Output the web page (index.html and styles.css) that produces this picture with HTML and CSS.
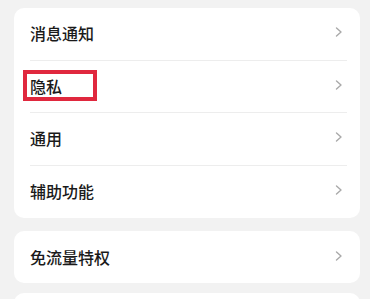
FILE: index.html
```html
<!DOCTYPE html>
<html lang="zh">
<head>
<meta charset="utf-8">
<link rel="stylesheet" href="styles.css">
</head>
<body>
<div class="page">
  <div class="card">
    <div class="row"><span class="label">消息通知</span><svg class="chev" viewBox="0 0 8 10"><polyline points="1.5,1 6,5 1.5,9"/></svg></div>
    <div class="row"><span class="label">隐私</span><svg class="chev" viewBox="0 0 8 10"><polyline points="1.5,1 6,5 1.5,9"/></svg><div class="mark"></div></div>
    <div class="row"><span class="label">通用</span><svg class="chev" viewBox="0 0 8 10"><polyline points="1.5,1 6,5 1.5,9"/></svg></div>
    <div class="row"><span class="label">辅助功能</span><svg class="chev" viewBox="0 0 8 10"><polyline points="1.5,1 6,5 1.5,9"/></svg></div>
  </div>
  <div class="card card-2">
    <div class="row"><span class="label">免流量特权</span><svg class="chev" viewBox="0 0 8 10"><polyline points="1.5,1 6,5 1.5,9"/></svg></div>
  </div>
  <div class="card card-3"></div>
</div>
</body>
</html>
```
FILE: styles.css
```css
html, body {
  margin: 0;
  padding: 0;
  background: #f2f2f2;
}
.page {
  width: 370px;
  height: 299px;
  overflow: hidden;
  padding: 8px 10px 0 14px;
  box-sizing: border-box;
  font-family: "Noto Sans CJK SC", "Noto Sans", sans-serif;
}
.card {
  background: #ffffff;
  border-radius: 10px;
  width: 346px;
}
.row {
  position: relative;
  display: flex;
  align-items: center;
  justify-content: space-between;
  height: 52.5px;
  box-sizing: border-box;
  margin: 0 13px 0 16px;
  border-bottom: 1px solid #ededed;
}
.row:last-child {
  border-bottom: none;
}
.label {
  font-size: 16px;
  font-weight: 500;
  color: #1a1a1a;
  line-height: 1;
  margin-top: -1px;
}
.chev {
  width: 8px;
  height: 10px;
  margin-right: 4px;
  margin-top: -3px;
  fill: none;
  stroke: #a9a9a9;
  stroke-width: 1.4;
  stroke-linecap: round;
  stroke-linejoin: round;
}
.mark {
  position: absolute;
  left: -7px;
  top: 9.5px;
  width: 74px;
  height: 31px;
  box-sizing: border-box;
  border: 4px solid #e0283e;
}
.card-2 {
  margin-top: 13px;
}
.card-2 .row {
  height: 52px;
}
.card-3 {
  margin-top: 10px;
  height: 40px;
}
```
